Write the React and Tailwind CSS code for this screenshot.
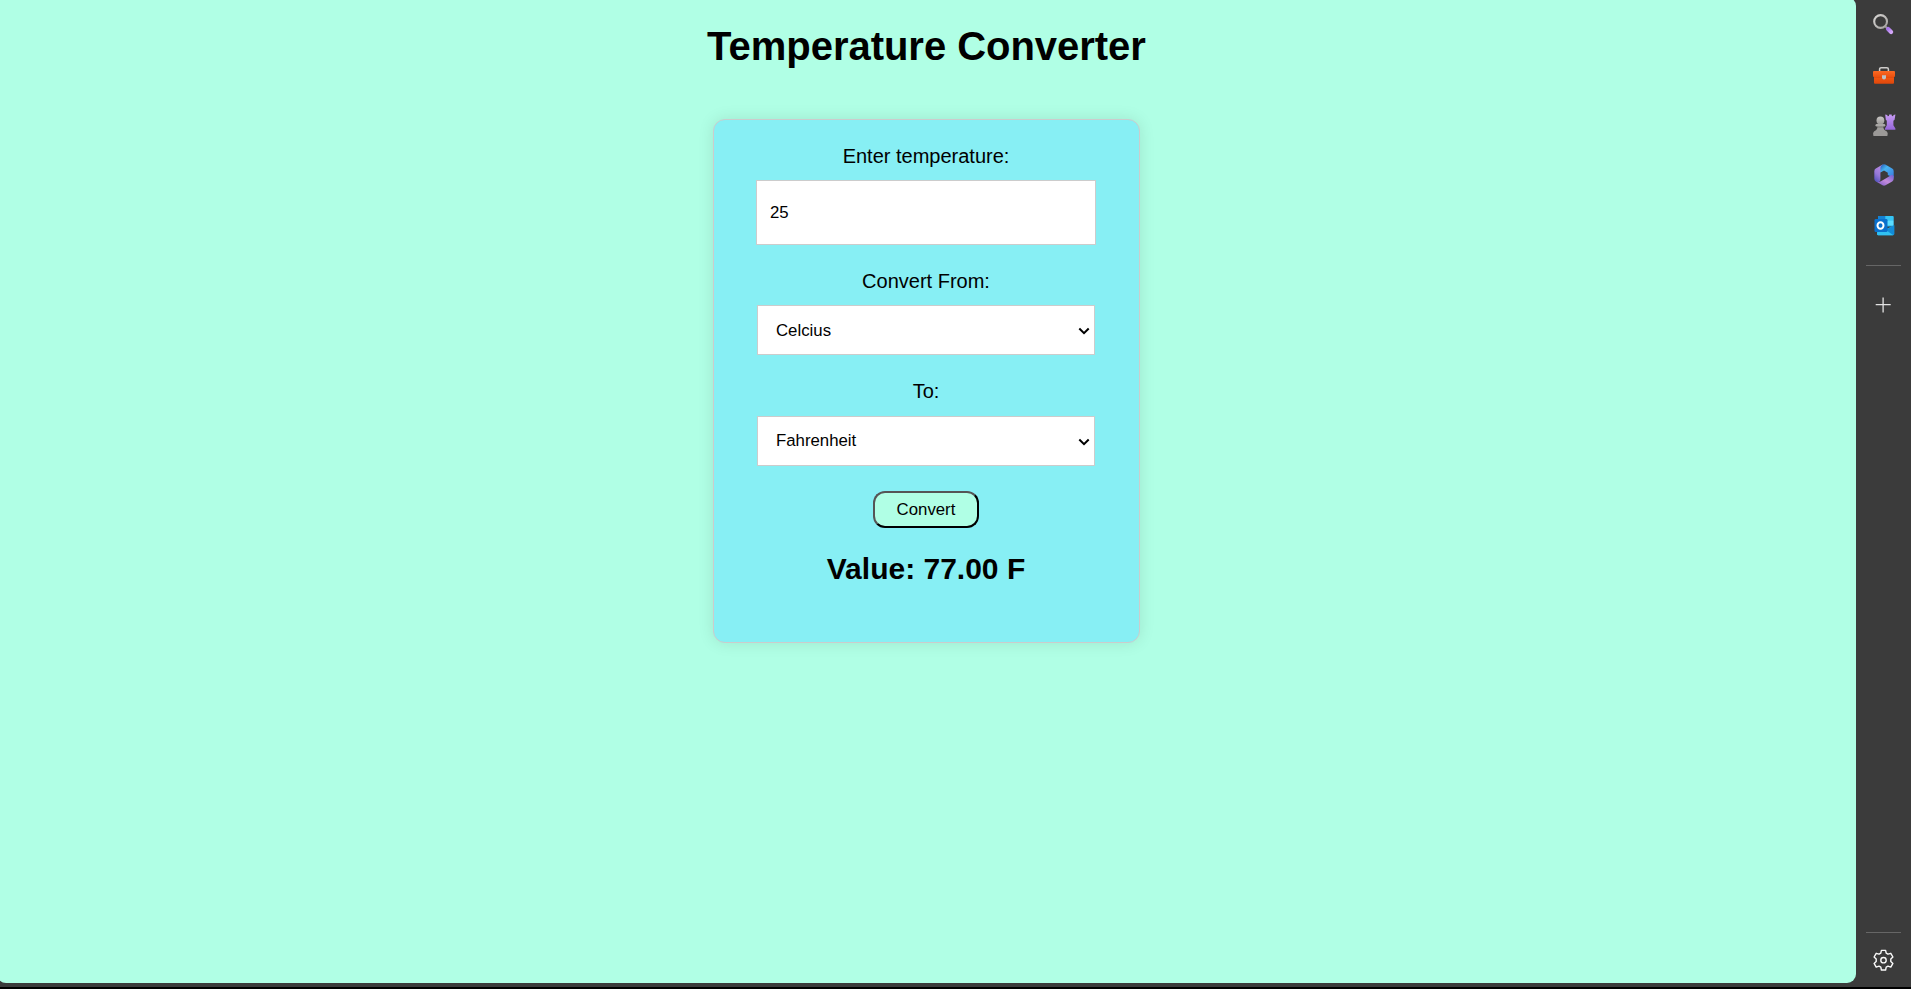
import React, { useState } from "react";

const UNITS = ["Celcius", "Fahrenheit", "Kelvin"];

function SearchIcon() {
  return (
    <svg width="24" height="24" viewBox="0 0 24 24" fill="none">
      <defs>
        <linearGradient id="lens" x1="0" y1="0" x2="1" y2="1">
          <stop stopColor="#d8d6d4" />
          <stop offset="1" stopColor="#a3a19f" />
        </linearGradient>
        <linearGradient id="handle" x1="0" y1="0" x2="1" y2="1">
          <stop stopColor="#a876ec" />
          <stop offset="1" stopColor="#d3a6f8" />
        </linearGradient>
      </defs>
      <path d="m13.500 14.500 2.500 2.500" stroke="#9a9896" strokeWidth="2" />
      <circle cx="8.600" cy="9.500" r="6.400" stroke="url(#lens)" strokeWidth="2.100" />
      <path d="m16.100 17.100 3 3" stroke="url(#handle)" strokeWidth="4.200" strokeLinecap="round" />
    </svg>
  );
}

function ToolboxIcon() {
  return (
    <svg width="24" height="24" viewBox="0 0 24 24" fill="none" className="mt-px">
      <defs>
        <linearGradient id="boxLid" x1="0" y1="0" x2="0" y2="1">
          <stop stopColor="#fb6a24" />
          <stop offset="1" stopColor="#ea500f" />
        </linearGradient>
        <linearGradient id="boxBase" x1="0" y1="0" x2="0" y2="1">
          <stop stopColor="#cf3d08" />
          <stop offset="0.300" stopColor="#ee5511" />
          <stop offset="1" stopColor="#df470b" />
        </linearGradient>
      </defs>
      <path d="M7.600 9V6.200A1.500 1.500 0 0 1 9.100 4.700h5.800a1.500 1.500 0 0 1 1.500 1.500V9" stroke="#cfcdcb" strokeWidth="1.500" />
      <path d="M2 13h20v6.700a1 1 0 0 1-1 1H3a1 1 0 0 1-1-1Z" fill="url(#boxBase)" />
      <path d="M2 8h20a1 1 0 0 1 1 1v4a1 1 0 0 1-1 1H2a1 1 0 0 1-1-1V9a1 1 0 0 1 1-1Z" fill="url(#boxLid)" />
      <path d="M10 12.200h4v2.400a2 2 0 0 1-4 0Z" fill="#bcc2c4" />
    </svg>
  );
}

function ChessIcon() {
  return (
    <svg width="24" height="24" viewBox="0 0 24 24" fill="none">
      <defs>
        <linearGradient id="rook" x1="0" y1="0" x2="0" y2="1">
          <stop stopColor="#c79bf4" />
          <stop offset="1" stopColor="#9566d8" />
        </linearGradient>
        <linearGradient id="pawn" x1="0" y1="0" x2="0" y2="1">
          <stop stopColor="#c8c6c4" />
          <stop offset="1" stopColor="#9a9896" />
        </linearGradient>
      </defs>
      <path d="m13.200 1.500 2 .5.500 1.200 1.200-.1.300-1.600h2.400l.3 1.600 1.200.1.400-1.200 1.900-.5-.8 5.200-1.200 1v4.600l2 3.300v1.200H13v-1.200l1.800-3.300V7.700l-1-1Z" fill="url(#rook)" />
      <path d="M5.800 12.500h5.200c.2 2.700 1 4.300 2.600 5.400H3.200c1.600-1.100 2.400-2.700 2.600-5.400Z" fill="#9d9b99" />
      <circle cx="8.400" cy="7.500" r="3.900" fill="url(#pawn)" />
      <rect x="3.500" y="11.100" width="9.800" height="2.400" rx="1.200" fill="#a9a7a5" />
      <path d="M5.800 13.500H11v.9H5.700Z" fill="#777573" />
      <path d="M1.200 20.300c0-1.600 1.600-2.900 3.400-2.900h7.600c1.800 0 3.400 1.300 3.400 2.900v1.600c0 .6-.4 1-1 1H2.200c-.6 0-1-.4-1-1Z" fill="#9b9997" />
    </svg>
  );
}

function HexIcon() {
  return (
    <svg width="24" height="24" viewBox="0 0 24 24" fill="none">
      <defs>
        <linearGradient id="hexLeft" x1="0.600" y1="0" x2="0.200" y2="1">
          <stop stopColor="#b98ae6" />
          <stop offset="0.550" stopColor="#9679d9" />
          <stop offset="1" stopColor="#5353bd" />
        </linearGradient>
        <linearGradient id="hexRight" x1="0" y1="0" x2="1" y2="1">
          <stop stopColor="#2456b4" />
          <stop offset="0.350" stopColor="#47b4f0" />
          <stop offset="1" stopColor="#3c79dc" />
        </linearGradient>
        <linearGradient id="hexBottom" x1="0" y1="1" x2="1" y2="0">
          <stop stopColor="#7356c4" />
          <stop offset="0.500" stopColor="#c48bdb" />
          <stop offset="1" stopColor="#6c62d2" />
        </linearGradient>
      </defs>
      <path d="M10.700 1.600 3.800 5.600A3 3 0 0 0 2.300 8.200v7.600a3 3 0 0 0 1.500 2.600l1 .6c2 .5 3.600-.3 3.600-2.400V9.500L10 7.700Z" fill="url(#hexLeft)" />
      <path d="M10.700 1.600a3 3 0 0 1 2.600 0l6.900 4a3 3 0 0 1 1.500 2.600v6.500l-5.900-2.600V9.800L12 7.500 8.400 9.600V5.400c0-1.700.9-3.100 2.300-3.800Z" fill="url(#hexRight)" />
      <path d="M4.500 18.800 10.500 22.300a3 3 0 0 0 3 0l6.700-3.900a3 3 0 0 0 1.500-2.600V13.500c-.2-1.500-1.500-2-2.700-1.300L12 16.400 8.400 18.500c-1.300.7-2.600.8-3.900.3Z" fill="url(#hexBottom)" />
    </svg>
  );
}

function OutlookIcon() {
  return (
    <svg width="24" height="24" viewBox="0 -0.500 24 24" fill="none">
      <path d="M7 2.500h13.500a1 1 0 0 1 1 1V13H6V3.500a1 1 0 0 1 1-1Z" fill="#2cb0e8" />
      <path d="M6 3.500a1 1 0 0 1 1-1h6.500V7H6Z" fill="#1482d4" />
      <path d="M13.500 2.500h7a1 1 0 0 1 1 1V7h-8Z" fill="#35c4f4" />
      <path d="M13.500 7h8v5h-8Z" fill="#5bdcff" />
      <path d="m5 12 8 4 9.200-4.200v8.700a1.200 1.200 0 0 1-1.200 1.200H6.200A1.200 1.200 0 0 1 5 20.500Z" fill="#1ea4e4" />
      <path d="m22.200 11.800-8.600 4.700 7.900 5c.4-.2.700-.6.700-1Z" fill="#128bd8" />
      <path d="m13 16 1.600.9 6.500 4.800H6.200c-.7 0-1.200-.5-1.200-1.200V19Z" fill="#31c1f2" />
      <rect x="2.500" y="5.500" width="13" height="13" rx="1.200" fill="#0a70cc" />
      <ellipse cx="8.500" cy="12" rx="3" ry="3.250" stroke="#fff" strokeWidth="2" />
    </svg>
  );
}

function PlusIcon() {
  return (
    <svg width="24" height="24" viewBox="0 0 24 24" fill="none" stroke="#e2e2e2" strokeWidth="1.300">
      <path d="M11.100 4.500v15M3.700 11.700h15" />
    </svg>
  );
}

function GearIcon() {
  return (
    <svg width="24" height="24" viewBox="0.500 -0.200 24 24" fill="none" stroke="#fafafa" strokeWidth="1.400" strokeLinejoin="round">
      <path d="M9.900 2.200h4.200l.6 2.800 1.800 1 2.800-.9 2.100 3.700-2.100 2v2.400l2.100 2-2.100 3.700-2.800-.9-1.800 1-.6 2.800H9.900L9.300 19l-1.800-1-2.800.9-2.100-3.700 2.100-2v-2.400l-2.100-2 2.100-3.700 2.800.9 1.800-1Z" />
      <circle cx="12" cy="12" r="2.700" />
    </svg>
  );
}

function UnitSelect({ label, value, onChange, className = "" }) {
  return (
    <div className="grid">
      <select
        aria-label={label}
        value={value}
        onChange={(e) => onChange(e.target.value)}
        className={`col-start-1 row-start-1 h-[50px] w-[338px] appearance-none rounded-none border border-[#ccc] bg-white pl-[18px] text-[16.8px] text-black ${className}`}
      >
        {UNITS.map((u) => (
          <option key={u}>{u}</option>
        ))}
      </select>
      <svg
        className="pointer-events-none col-start-1 row-start-1 mt-px mr-[5px] self-center justify-self-end"
        width="12" height="8" viewBox="0 0 12 8" fill="none" stroke="#000" strokeWidth="2"
      >
        <path d="m1.300 1.500 4.700 4.700 4.700-4.700" />
      </svg>
    </div>
  );
}

function Sidebar() {
  return (
    <aside className="flex w-[55px] shrink-0 flex-col pt-[12px] pb-[15px] pl-[10px]">
      <div className="flex flex-col gap-[26px] pl-[6px]">
        <SearchIcon />
        <ToolboxIcon />
        <ChessIcon />
        <HexIcon />
        <OutlookIcon />
      </div>
      <div className="mt-[28px] h-px w-[35px] bg-[#666]" />
      <div className="mt-[27px] pl-[6px]">
        <PlusIcon />
      </div>
      <div className="mt-auto mb-[15px] h-px w-[35px] bg-[#666]" />
      <div className="pl-[6px]">
        <GearIcon />
      </div>
    </aside>
  );
}

export default function App() {
  const [temp, setTemp] = useState("25");
  const [from, setFrom] = useState("Celcius");
  const [to, setTo] = useState("Fahrenheit");

  return (
    <div className="h-[989px] w-[1911px] overflow-hidden bg-black font-['Liberation_Sans',Arial,sans-serif] text-black">
      <div className="flex h-[987px] overflow-hidden bg-[#3b3b3b]">
        <main className="-mt-[3px] -ml-[3px] flex h-[986px] w-[1859px] shrink-0 flex-col items-center rounded-[9px] bg-[#b0ffe5]">
          <h1 className="mt-[26px] text-[40px] leading-[46px] font-bold tracking-[-0.030px]">Temperature Converter</h1>
          <section className="mt-[50px] flex h-[524px] w-[427px] flex-col items-center rounded-[12px] border border-[#ccc] bg-[#87eff4] pt-[24px] pr-px shadow-[0_0_16px_rgba(0,0,0,0.1)]">
            <label htmlFor="temp" className="text-[20px] leading-[24px]">Enter temperature:</label>
            <input
              id="temp"
              value={temp}
              onChange={(e) => setTemp(e.target.value)}
              className="mt-[12px] h-[65px] w-[340px] border border-[#ccc] bg-white pr-[12px] pl-[13px] text-[16.8px]"
            />
            <div className="mt-[24px] mb-[12px] text-[20px] leading-[24px]">Convert From:</div>
            <UnitSelect label="Convert from" value={from} onChange={setFrom} className="pt-[2px]" />
            <div className="mt-[24px] mb-[13px] text-[20px] leading-[24px]">To:</div>
            <UnitSelect label="Convert to" value={to} onChange={setTo} />
            <button className="mt-[25px] h-[37px] w-[106px] rounded-[12px] border-2 border-t-[#555] border-r-black border-b-black border-l-[#555] bg-[#b0ffe5] text-[16.8px] leading-[20px]">
              Convert
            </button>
            <h2 className="mt-[24px] text-[30px] leading-[34px] font-bold">Value: 77.00 F</h2>
          </section>
        </main>
        <Sidebar />
      </div>
    </div>
  );
}
